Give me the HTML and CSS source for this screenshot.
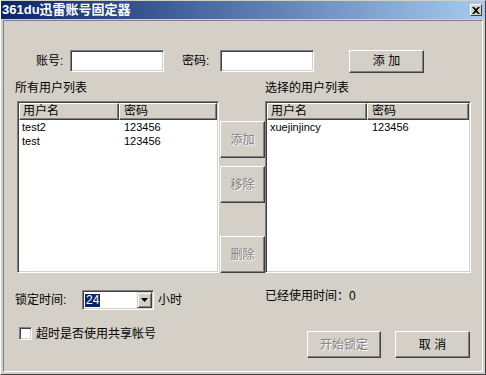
FILE: index.html
```html
<!DOCTYPE html>
<html lang="zh-CN">
<head>
<meta charset="utf-8">
<title>361du迅雷账号固定器</title>
<link rel="stylesheet" href="styles.css">
</head>
<body>
<div class="window">
  <div class="titlebar">
    <span class="title">361du迅雷账号固定器</span>
    <span class="close"><svg width="8" height="7" viewBox="0 0 8 7"><path d="M0 0h2l2 2 2-2h2L5 3.5 8 7H6L4 5 2 7H0l3-3.5z" fill="#000"/></svg></span>
  </div>
  <div class="client">
    <div class="account">
      <span class="lbl lbl-user">账号:</span>
      <span class="input"></span>
      <span class="lbl lbl-pass">密码:</span>
      <span class="input"></span>
      <span class="btn btn-add">添 加</span>
    </div>
    <div class="lists">
      <div class="col col-left">
        <div class="cap cap-left">所有用户列表</div>
        <div class="listview">
          <div class="lv-head"><span class="hc hc1">用户名</span><span class="hc hc2">密码</span></div>
          <div class="lv-row"><span class="c1">test2</span><span class="c2">123456</span></div>
          <div class="lv-row"><span class="c1">test</span><span class="c2">123456</span></div>
        </div>
      </div>
      <div class="col-mid">
        <span class="btn mbtn dis m-add">添加</span>
        <span class="btn mbtn dis m-rm">移除</span>
        <span class="btn mbtn dis m-del">删除</span>
      </div>
      <div class="col col-right">
        <div class="cap">选择的用户列表</div>
        <div class="listview lv-right">
          <div class="lv-head"><span class="hc hc1">用户名</span><span class="hc hc2">密码</span></div>
          <div class="lv-row"><span class="c1">xuejinjincy</span><span class="c2">123456</span></div>
        </div>
      </div>
    </div>
    <div class="bottom">
      <div class="b-left">
        <div class="lock-row">
          <span class="lbl-lock">锁定时间:</span>
          <span class="combo"><span class="combo-val"><span class="sel">24</span></span><span class="drop"><svg width="7" height="4" viewBox="0 0 7 4"><path d="M0 0h7L3.5 4z" fill="#000"/></svg></span></span>
          <span class="unit">小时</span>
        </div>
        <div class="check-row">
          <span class="checkbox"></span>
          <span class="check-lbl">超时是否使用共享帐号</span>
        </div>
      </div>
      <div class="b-right">
        <div class="used">已经使用时间：0</div>
        <div class="actions">
          <span class="btn act dis">开始锁定</span>
          <span class="btn act act-cancel">取 消</span>
        </div>
      </div>
    </div>
  </div>
</div>
</body>
</html>
```
FILE: styles.css
```css
* { box-sizing: border-box; }
body {
  margin: 0;
  font-family: "Liberation Sans", "Noto Sans CJK SC", sans-serif;
  font-size: 12px;
  color: #000;
  background: #d4d0c8;
}
.window {
  width: 486px;
  height: 375px;
  background: #d4d0c8;
  border: 1px solid;
  border-color: #d4d0c8 #404040 #404040 #fff;
  display: flex;
  flex-direction: column;
}
.titlebar {
  height: 18px;
  flex: none;
  background: linear-gradient(to right, #0a246a, #a6caf0);
  display: flex;
  align-items: center;
  justify-content: space-between;
  padding: 0 3px 0 1px;
}
.title {
  color: #fff;
  font-weight: bold;
  font-size: 13px;
  line-height: 18px;
  font-family: "Liberation Sans", "Noto Sans CJK SC", sans-serif;
}
.close {
  width: 12px;
  height: 12px;
  background: #d4d0c8;
  border: 1px solid;
  border-color: #fff #404040 #404040 #fff;
  display: flex;
  align-items: center;
  justify-content: center;
}
.client {
  flex: 1;
  margin: 1px 2px 2px 2px;
  border: 1px solid;
  border-color: #808080 #fff #fff #808080;
}
.account {
  display: flex;
  align-items: center;
  height: 22px;
  margin-top: 29px;
  padding-left: 32px;
}
.lbl { line-height: 14px; }
.lbl-user { width: 34px; }
.lbl-pass { width: 38px; margin-left: 18px; }
.input {
  width: 94px;
  height: 22px;
  background: #fff;
  border: 1px solid;
  border-color: #808080 #fff #fff #808080;
  box-shadow: inset 1px 1px #404040, inset -1px -1px #d4d0c8;
}
.btn {
  display: flex;
  align-items: center;
  justify-content: center;
  background: #d4d0c8;
  border: 1px solid;
  border-color: #fff #404040 #404040 #fff;
  box-shadow: inset -1px -1px #808080;
  line-height: 14px;
}
.btn.dis { color: #808080; text-shadow: 1px 1px 0 #fff; }
.btn-add { width: 75px; height: 23px; margin-left: 35px; }
.lists {
  display: flex;
  margin-top: 8px;
}
.col { display: flex; flex-direction: column; }
.col-left { width: 202px; margin-left: 13px; }
.col-right { width: 206px; }
.cap {
  height: 21px;
  padding-top: 1px;
  line-height: 14px;
}
.cap-left { margin-left: -2px; }
.listview {
  height: 172px;
  background: #fff;
  border: 1px solid;
  border-color: #808080 #fff #fff #808080;
  box-shadow: inset 1px 1px #404040, inset -1px -1px #d4d0c8;
  padding: 1px;
  overflow: hidden;
}
.lv-head { display: flex; height: 17px; }
.hc {
  background: #d4d0c8;
  border: 1px solid;
  border-color: #fff #404040 #404040 #fff;
  box-shadow: inset -1px -1px #808080;
  line-height: 14px;
  padding-left: 3px;
}
.hc1 { width: 100px; flex: none; }
.hc2 { flex: 1; padding-left: 4px; }
.lv-row { display: flex; height: 14px; line-height: 14px; font-size: 11px; }
.lv-row:first-of-type { margin-top: 0; }
.lv-head + .lv-row { margin-top: 0; }
.c1 { width: 100px; padding-left: 3px; flex: none; }
.c2 { padding-left: 5px; }
.col-mid {
  width: 46px;
  display: flex;
  flex-direction: column;
  padding-left: 1px;
}
.mbtn { width: 45px; height: 37px; }
.m-add { margin-top: 41px; }
.m-rm { margin-top: 8px; }
.m-del { margin-top: 33px; }
.bottom { display: flex; }
.b-left { width: 261px; padding-left: 11px; }
.lock-row {
  display: flex;
  align-items: center;
  height: 20px;
  margin-top: 17px;
}
.lbl-lock { width: 67px; line-height: 14px; }
.combo {
  width: 72px;
  height: 20px;
  background: #fff;
  border: 1px solid;
  border-color: #808080 #fff #fff #808080;
  box-shadow: inset 1px 1px #404040, inset -1px -1px #d4d0c8;
  display: flex;
  padding: 1px;
}
.combo-val { flex: 1; display: flex; align-items: center; padding-left: 1px; }
.sel {
  background: #0a246a;
  color: #fff;
  height: 13px;
  line-height: 13px;
  padding: 0 1px;
}
.drop {
  width: 15px;
  height: 16px;
  background: #d4d0c8;
  border: 1px solid;
  border-color: #d4d0c8 #404040 #404040 #d4d0c8;
  box-shadow: inset 1px 1px #fff, inset -1px -1px #808080;
  display: flex;
  align-items: center;
  justify-content: center;
}
.unit { margin-left: 4px; line-height: 14px; }
.check-row {
  display: flex;
  align-items: center;
  height: 13px;
  margin-top: 17px;
  padding-left: 4px;
}
.checkbox {
  width: 13px;
  height: 13px;
  background: #fff;
  border: 1px solid;
  border-color: #808080 #fff #fff #808080;
  box-shadow: inset 1px 1px #404040, inset -1px -1px #d4d0c8;
}
.check-lbl { margin-left: 4px; line-height: 14px; }
.b-right { width: 210px; }
.used { margin-top: 16px; line-height: 14px; }
.actions { display: flex; margin-top: 28px; }
.act { width: 74px; height: 27px; margin-left: 42px; }
.act-cancel { width: 75px; margin-left: 14px; }
```
